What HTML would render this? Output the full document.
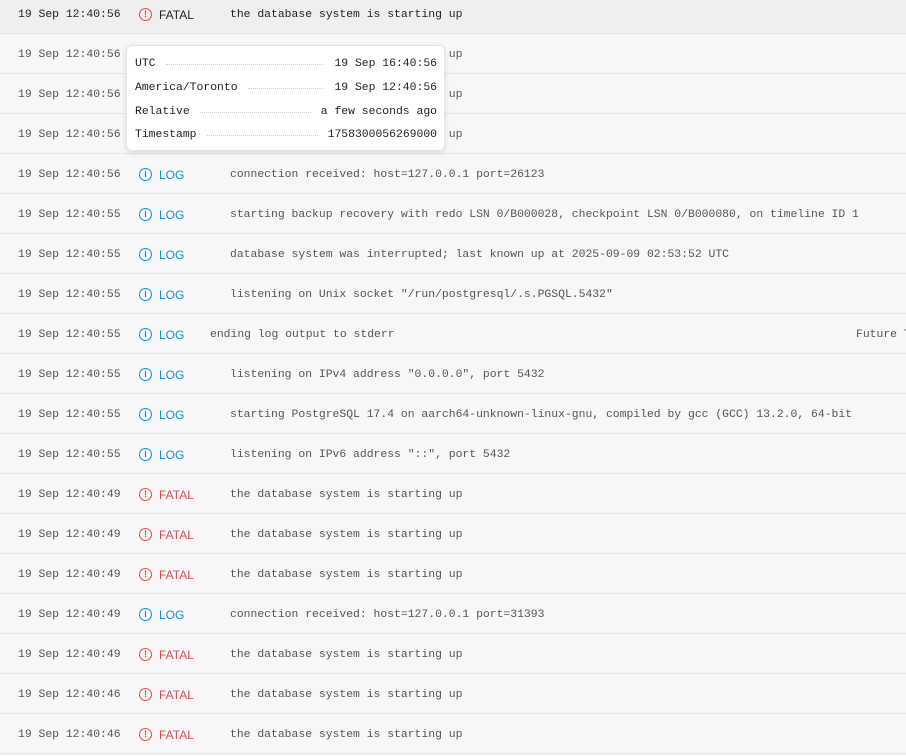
<!DOCTYPE html>
<html><head><style>
body{margin:0;width:906px;height:756px;overflow:hidden;background:#f7f7f7;font-family:"Liberation Mono",monospace;font-size:11.4px;color:#555;position:relative}
.row{position:absolute;left:0;width:906px;height:39px;border-bottom:1px solid #e6e6e6;}
.row span{position:absolute;top:1px;line-height:40px;white-space:nowrap}
.ts{left:18px}
.ic{left:139px;top:14px!important;width:11px;height:11px;border:1.3px solid;border-radius:50%;line-height:11px!important;text-align:center;font-family:"Liberation Sans",sans-serif;font-size:9px;font-weight:bold}
.lv{left:159px;font-family:"Liberation Sans",sans-serif;font-size:12px}
.f{color:#e5484d}.l{color:#0d8ce9}
.msg{left:230px}
.tip{position:absolute;left:126px;top:45px;width:317px;height:104px;background:#fff;border:1px solid #e4e4e4;border-radius:6px;box-shadow:0 2px 6px rgba(0,0,0,.12);color:#222}
.tr{position:absolute;left:8px;right:7px;height:20px;display:flex;align-items:center}
.tr .d{flex:1;border-top:1px dotted #ccc;margin:0 10px}
</style></head><body>
<div id="rows"></div>
<div class="tip">
<div class="tr" style="top:8px"><span>UTC</span><span class="d"></span><span>19 Sep 16:40:56</span></div>
<div class="tr" style="top:32px"><span>America/Toronto</span><span class="d"></span><span>19 Sep 12:40:56</span></div>
<div class="tr" style="top:56px"><span>Relative</span><span class="d"></span><span>a few seconds ago</span></div>
<div class="tr" style="top:79px"><span>Timestamp</span><span class="d"></span><span>1758300056269000</span></div>
</div>
<script>
var d=[
["12:40:56","F","the database system is starting up"],
["12:40:56","F","the database system is starting up"],
["12:40:56","F","the database system is starting up"],
["12:40:56","F","the database system is starting up"],
["12:40:56","L","connection received: host=127.0.0.1 port=26123"],
["12:40:55","L","starting backup recovery with redo LSN 0/B000028, checkpoint LSN 0/B000080, on timeline ID 1"],
["12:40:55","L","database system was interrupted; last known up at 2025-09-09 02:53:52 UTC"],
["12:40:55","L","listening on Unix socket \"/run/postgresql/.s.PGSQL.5432\""],
["12:40:55","L","X"],
["12:40:55","L","listening on IPv4 address \"0.0.0.0\", port 5432"],
["12:40:55","L","starting PostgreSQL 17.4 on aarch64-unknown-linux-gnu, compiled by gcc (GCC) 13.2.0, 64-bit"],
["12:40:55","L","listening on IPv6 address \"::\", port 5432"],
["12:40:49","F","the database system is starting up"],
["12:40:49","F","the database system is starting up"],
["12:40:49","F","the database system is starting up"],
["12:40:49","L","connection received: host=127.0.0.1 port=31393"],
["12:40:49","F","the database system is starting up"],
["12:40:46","F","the database system is starting up"],
["12:40:46","F","the database system is starting up"]];
var h="";
d.forEach(function(r,i){
var top=i*40-6;var first=i==0;
var f=r[1]=="F";
var msg=r[2]=="X"?'<span style="left:210px">ending log output to stderr</span><span style="left:856px">Future T</span>':'<span class="msg">'+r[2].replace(/</g,"&lt;")+'</span>';
h+='<div class="row" style="top:'+top+'px;'+(first?'background:#efefef;color:#222':'')+'"><span class="ts">19 Sep '+r[0]+'</span><span class="ic '+(f?'f':'l')+'">'+(f?'!':'i')+'</span><span class="lv '+(f?'f':'l')+'"'+(first?' style="color:#222"':'')+'>'+(f?'FATAL':'LOG')+'</span>'+msg+'</div>';
});
document.getElementById("rows").innerHTML=h;
</script>
</body></html>
